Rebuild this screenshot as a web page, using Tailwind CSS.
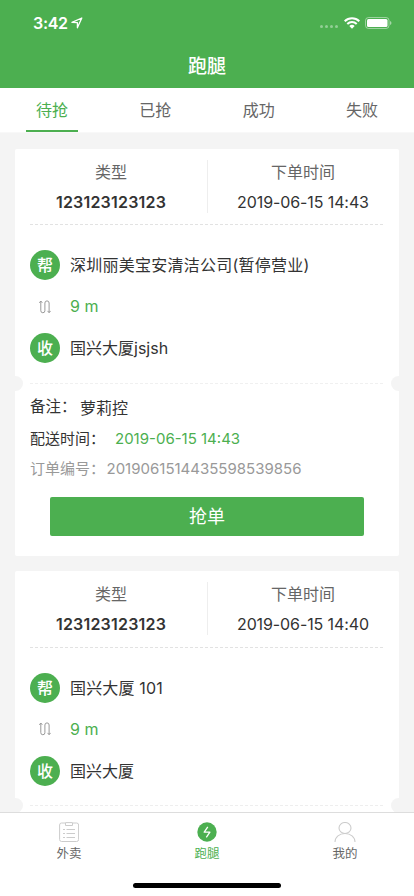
<!DOCTYPE html>
<html lang="zh-CN">
<head>
<meta charset="utf-8">
<meta name="viewport" content="width=device-width, initial-scale=1">
<title>跑腿</title>
<script src="https://cdn.jsdelivr.net/npm/@tailwindcss/browser@4"></script>
</head>
<body class="w-[414px] h-[896px] overflow-hidden bg-[#f4f4f4] font-['Inter','Noto_Sans_CJK_SC',sans-serif] text-base text-[#333]">
<div class="flex h-[896px] flex-col">
  <header class="h-[88px] shrink-0 bg-[#4caf50] text-white">
    <div class="flex h-[44px] items-center pl-[33px] pr-[22px] pt-[1px]">
      <span class="text-[16px] font-semibold tracking-[-0.3px]">3:42</span>
      <svg class="ml-[3px]" width="12" height="12" viewBox="0 0 12 12" fill="none" stroke="white" stroke-width="1.3" stroke-linejoin="round"><path d="M1 5.4 10.8 1 6.4 10.8V5.6Z"/></svg>
      <div class="ml-auto flex items-center">
        <div class="mr-[6px] mt-[8px] flex gap-[2px]"><i class="size-[3px] rounded-full bg-white/40"></i><i class="size-[3px] rounded-full bg-white/40"></i><i class="size-[3px] rounded-full bg-white/40"></i><i class="size-[3px] rounded-full bg-white/40"></i></div>
        <svg class="mr-[5px]" width="16" height="12" viewBox="0 0 16 12" fill="none" stroke="white" stroke-width="2"><path d="M.7 4.3a10.4 10.4 0 0 1 14.6 0M3.3 7a6.7 6.7 0 0 1 9.4 0"/><path d="M5.3 9.1a3.8 3.8 0 0 1 5.4 0L8 11.8Z" fill="white" stroke="none"/></svg>
        <svg width="27" height="12" viewBox="0 0 27 12"><rect x=".5" y=".5" width="23.5" height="11" rx="3" fill="none" stroke="white" stroke-opacity=".45"/><rect x="2" y="2" width="20.5" height="8" rx="1.5" fill="white"/><path d="M25 4q1.5.5 1.5 2T25 8Z" fill="white" fill-opacity=".5"/></svg>
      </div>
    </div>
    <h1 class="flex h-[44px] items-center justify-center pt-[2px] text-[19px] font-medium">跑腿</h1>
  </header>
  <nav class="flex h-[45px] shrink-0 justify-between border-b border-[#f8f8f8] bg-white px-[26px] text-[#666]">
    <a class="flex h-[44px] w-[52px] items-center justify-center border-b-2 border-[#4caf50] pt-[2px] text-[#4caf50]">待抢</a>
    <a class="flex h-[44px] w-[52px] items-center justify-center">已抢</a>
    <a class="flex h-[44px] w-[52px] items-center justify-center">成功</a>
    <a class="flex h-[44px] w-[52px] items-center justify-center">失败</a>
  </nav>
  <main class="flex min-h-0 flex-1 flex-col gap-[15px] overflow-hidden px-[15px] pt-[16px]">
    <section class="h-[407px] shrink-0 rounded-[2px] bg-white">
      <div class="flex h-[75px] items-start pt-[11px] text-center leading-[30px]">
        <div class="h-[53px] w-[193px] border-r border-[#eee]"><p class="-mt-[3px] text-[#666]">类型</p><p class="-mt-[0.5px] text-[16px] font-semibold tracking-[0.2px]">123123123123</p></div>
        <div class="w-[190px]"><p class="-mt-[3px] text-[#666]">下单时间</p><p class="-mt-[0.5px] tracking-[-0.1px]">2019-06-15 14:43</p></div>
      </div>
      <svg class="ml-[15px] block" width="354" height="1"><path d="M0 .5h354" stroke="#e2e2e2" stroke-dasharray="3 2"/></svg>
      <div class="flex h-[157.5px] flex-col gap-[11.5px] px-[15px] pt-[25px]">
        <div class="flex h-[30px] items-center"><b class="mr-[10px] flex size-[30px] items-center justify-center rounded-full bg-[#4caf50] text-[16px] font-medium text-white">帮</b><span class="tracking-[0.24px]">深圳丽美宝安清洁公司(暂停营业)</span></div>
        <div class="flex h-[30px] items-center text-[#4caf50]"><svg class="ml-[9px] mr-[19px]" width="12" height="14" viewBox="0 0 12 14" fill="none" stroke="#999" stroke-width="1"><path d="M1.8 1v9.700a2 2 0 0 0 4.100 0V3a2.100 2.100 0 0 1 4.200 0V12.500M.3 2.800 1.800 1 3.300 2.800M8.600 10.900l1.500 1.800 1.500-1.800"/></svg><span class="-mt-[1px]">9 m</span></div>
        <div class="flex h-[30px] items-center"><b class="mr-[10px] flex size-[30px] items-center justify-center rounded-full bg-[#4caf50] text-[16px] font-medium text-white">收</b><span>国兴大厦jsjsh</span></div>
      </div>
      <div class="-mx-[7px] -my-[7px] flex h-[15px] items-center justify-between"><i class="size-[15px] rounded-full bg-[#f4f4f4]"></i><svg width="354" height="1"><path d="M0 .5h354" stroke="#f0f0f0" stroke-dasharray="3 2"/></svg><i class="size-[15px] rounded-full bg-[#f4f4f4]"></i></div>
      <div class="px-[15px] pt-[8px]">
        <p class="flex h-[32px] items-center"><span class="-mt-[2px] w-[50px] text-[15.5px]">备注：</span><span>萝莉控</span></p>
        <p class="flex h-[30px] items-center pt-[1px] text-[15px]"><span class="w-[85px]">配送时间：</span><span class="text-[#4caf50]">2019-06-15 14:43</span></p>
        <p class="flex h-[30px] items-center pt-[1px] text-[15px] text-[#999]"><span class="w-[76.5px]">订单编号：</span><span>2019061514435598539856</span></p>
      </div>
      <button class="ml-[35px] mt-[13.4px] block h-[39px] w-[314px] rounded-[2px] bg-[#4caf50] text-[18px] text-white">抢单</button>
    </section>
    <section class="h-[407px] shrink-0 rounded-[2px] bg-white">
      <div class="flex h-[75.5px] items-start pt-[11px] text-center leading-[30px]">
        <div class="h-[53px] w-[193px] border-r border-[#eee]"><p class="-mt-[3px] text-[#666]">类型</p><p class="text-[16px] font-semibold tracking-[0.2px]">123123123123</p></div>
        <div class="w-[190px]"><p class="-mt-[3px] text-[#666]">下单时间</p><p class="-mt-[0.5px] tracking-[-0.1px]">2019-06-15 14:40</p></div>
      </div>
      <svg class="ml-[15px] block" width="354" height="1"><path d="M0 .5h354" stroke="#e2e2e2" stroke-dasharray="3 2"/></svg>
      <div class="flex h-[157.5px] flex-col gap-[11.5px] px-[15px] pt-[25px]">
        <div class="flex h-[30px] items-center"><b class="mr-[10px] flex size-[30px] items-center justify-center rounded-full bg-[#4caf50] text-[16px] font-medium text-white">帮</b><span class="tracking-[0.15px]">国兴大厦 101</span></div>
        <div class="flex h-[30px] items-center text-[#4caf50]"><svg class="ml-[9px] mr-[19px]" width="12" height="14" viewBox="0 0 12 14" fill="none" stroke="#999" stroke-width="1"><path d="M1.800 1v9.700a2 2 0 0 0 4.100 0V3a2.100 2.100 0 0 1 4.200 0V12.500M.3 2.800 1.800 1 3.300 2.800M8.600 10.900l1.500 1.800 1.500-1.800"/></svg><span class="-mt-[1px]">9 m</span></div>
        <div class="flex h-[30px] items-center"><b class="mr-[10px] flex size-[30px] items-center justify-center rounded-full bg-[#4caf50] text-[16px] font-medium text-white">收</b><span>国兴大厦</span></div>
      </div>
      <div class="-mx-[7px] -my-[7px] flex h-[15px] items-center justify-between"><i class="size-[15px] rounded-full bg-[#f4f4f4]"></i><svg width="354" height="1"><path d="M0 .5h354" stroke="#eee" stroke-dasharray="3 2"/></svg><i class="size-[15px] rounded-full bg-[#f4f4f4]"></i></div>
    </section>
  </main>
  <footer class="h-[84px] shrink-0 border-t border-[#ddd] bg-white">
    <div class="grid h-[70px] grid-cols-3 text-[12.5px] leading-[18px] text-[#666]">
      <a class="flex flex-col items-center pt-[9px]"><svg class="mb-[3px]" width="20" height="20" viewBox="0 0 20 20" fill="none" stroke="#ccc"><path d="M6 1H2.500Q.6 1 .6 3v14.500q0 2 2 2h15q2 0 2-2V3q0-2-2-2H14M6.500.6h7v2.900h-7ZM4 7.500h2M7.500 7.500H16M4 11.500h2M7.500 11.500H16M4 15.500h2M7.500 15.500H16"/></svg>外卖</a>
      <a class="flex flex-col items-center pt-[9px] text-[#4caf50]"><svg class="mb-[3px]" width="20" height="20" viewBox="0 0 20 20"><circle cx="10" cy="10" r="9.700" fill="#4caf50"/><path d="M10.800 4.800 7.200 10.200H12.900L9.300 15.400" stroke="white" fill="none" stroke-width="1.300" stroke-linejoin="round"/></svg>跑腿</a>
      <a class="flex flex-col items-center pt-[9px]"><svg class="mb-[3px]" width="22" height="20" viewBox="0 0 22 20" fill="none" stroke="#ccc" stroke-width="1.100"><ellipse cx="11" cy="6" rx="6" ry="5.500"/><path d="M1 20c0-5 4.500-8.500 10-8.500S21 15 21 20"/></svg>我的</a>
    </div>
    <div class="mx-auto h-[5px] w-[148px] rounded-full bg-black"></div>
  </footer>
</div>
</body>
</html>
